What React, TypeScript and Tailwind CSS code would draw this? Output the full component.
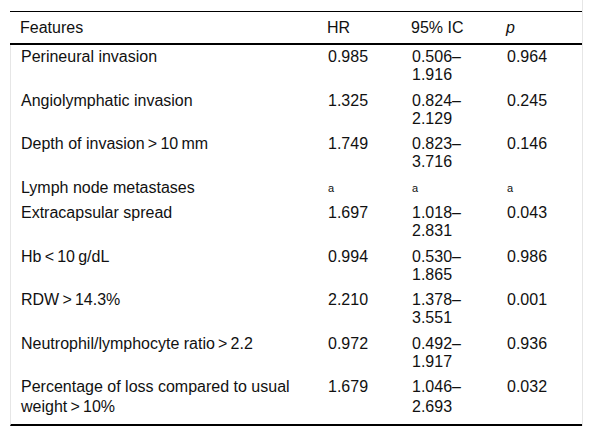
import React from "react";

type Row = { f: React.ReactNode; hr: React.ReactNode; ic: React.ReactNode; p: React.ReactNode; last?: boolean };

const Sup = () => <sup className="text-[11px] relative top-[-1px]">a</sup>;

const T = "\u2009";

const rows: Row[] = [
  { f: "Perineural invasion", hr: "0.985", ic: ["0.506–", "1.916"], p: "0.964" },
  { f: "Angiolymphatic invasion", hr: "1.325", ic: ["0.824–", "2.129"], p: "0.245" },
  { f: `Depth of invasion${T}>${T}10${T}mm`, hr: "1.749", ic: ["0.823–", "3.716"], p: "0.146" },
  { f: "Lymph node metastases", hr: <Sup />, ic: <Sup />, p: <Sup /> },
  { f: "Extracapsular spread", hr: "1.697", ic: ["1.018–", "2.831"], p: "0.043" },
  { f: `Hb${T}<${T}10${T}g/dL`, hr: "0.994", ic: ["0.530–", "1.865"], p: "0.986" },
  { f: `RDW${T}>${T}14.3%`, hr: "2.210", ic: ["1.378–", "3.551"], p: "0.001" },
  { f: `Neutrophil/lymphocyte ratio${T}>${T}2.2`, hr: "0.972", ic: ["0.492–", "1.917"], p: "0.936" },
  {
    f: ["Percentage of loss compared to usual", `weight${T}>${T}10%`],
    hr: "1.679",
    ic: ["1.046–", "2.693"],
    p: "0.032",
    last: true,
  },
];

function twoLines(v: React.ReactNode, last?: boolean) {
  if (Array.isArray(v)) {
    return (
      <>
        <span className="block">{v[0]}</span>
        <span className={last ? "block leading-[22px]" : "block"}>{v[1]}</span>
      </>
    );
  }
  return v;
}

const grid = "grid grid-cols-[307px_84px_95px_1fr]";
const cell = "px-[10px]";

export default function App() {
  return (
    <div
      className="w-[592px] h-[437px] bg-white text-[#111] text-[16px] leading-[18px]"
      style={{ fontFamily: '"Liberation Sans", Arial, sans-serif' }}
    >
      <div className="ml-[10px] w-[573px] border-r border-[#e6e6e6] pt-[11px]">
        <div className={`${grid} border-t border-black border-b-2 pt-[7px] pb-[6px]`}>
          <div className={cell}>Features</div>
          <div className={cell}>HR</div>
          <div className={cell}>95% IC</div>
          <div className={cell}>
            <i>p</i>
          </div>
        </div>
        <div className="border-l border-[#e6e6e6] border-b-2 border-b-black">
          {rows.map((r, i) => (
            <div key={i} className={`${grid} pt-[3px] ${r.last ? "pb-[6px]" : "pb-[4.5px]"}`}>
              <div className={cell}>{twoLines(r.f, r.last)}</div>
              <div className={cell}>{r.hr}</div>
              <div className={cell}>{twoLines(r.ic, r.last)}</div>
              <div className={cell}>{r.p}</div>
            </div>
          ))}
        </div>
      </div>
    </div>
  );
}
